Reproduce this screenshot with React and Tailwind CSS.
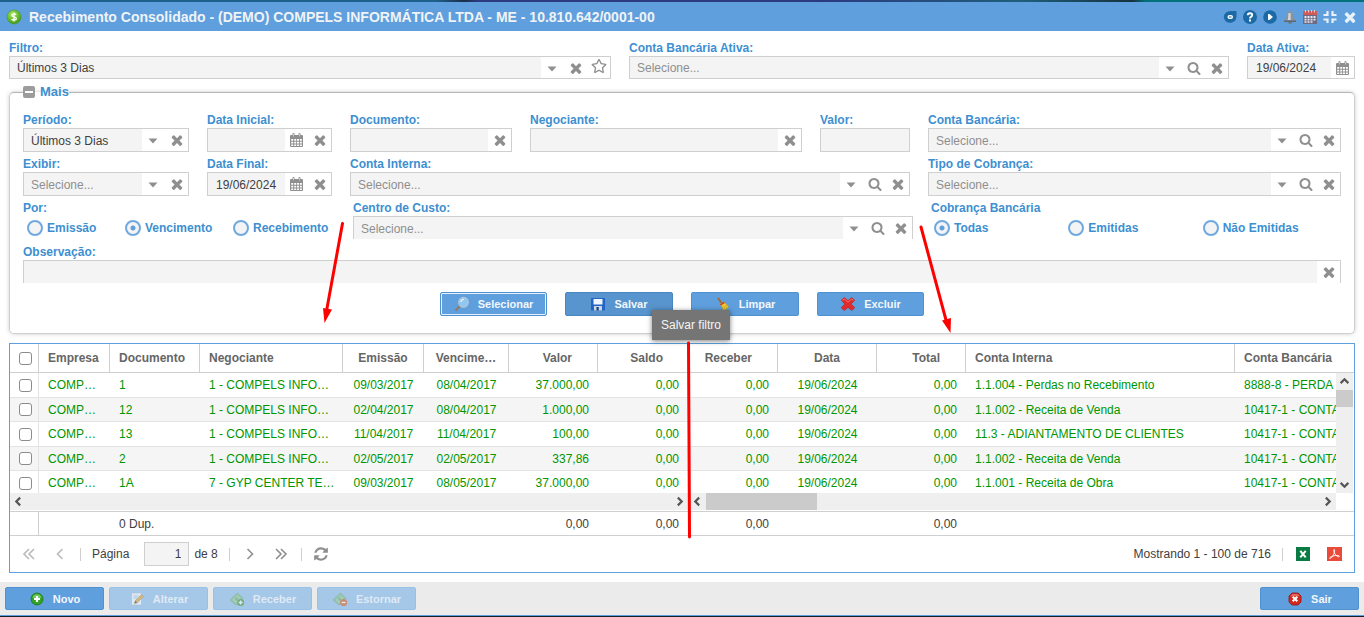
import React from "react";
import { FaRegStar } from "react-icons/fa";

/* ---------- icons ---------- */

function TimesIcon({ className }) {
  return (
    <svg viewBox="0 0 1792 1792" fill="currentColor" className={className} aria-hidden="true">
      <path d="M1490 1322q0 40-28 68l-136 136q-28 28-68 28t-68-28l-294-294-294 294q-28 28-68 28t-68-28l-136-136q-28-28-28-68t28-68l294-294-294-294q-28-28-28-68t28-68l136-136q28-28 68-28t68 28l294 294 294-294q28-28 68-28t68 28l136 136q28 28 28 68t-28 68l-294 294 294 294q28 28 28 68z" />
    </svg>
  );
}

function SearchIcon({ className }) {
  return (
    <svg viewBox="0 0 1792 1792" fill="currentColor" className={className} aria-hidden="true">
      <path d="M1216 832q0-185-131.5-316.5t-316.5-131.5-316.5 131.5-131.5 316.5 131.5 316.5 316.5 131.5 316.5-131.5 131.5-316.5zm512 832q0 52-38 90t-90 38q-54 0-90-38l-343-342q-179 124-399 124-143 0-273.5-55.5t-225-150-150-225-55.5-273.5 55.5-273.5 150-225 225-150 273.5-55.5 273.5 55.5 225 150 150 225 55.5 273.5q0 220-124 399l343 343q37 37 37 90z" />
    </svg>
  );
}

function RefreshIcon({ className }) {
  return (
    <svg viewBox="0 0 1792 1792" fill="currentColor" className={className} aria-hidden="true">
      <path d="M1639 1056q0 5-1 7-64 268-268 434.5t-478 166.5q-146 0-282.5-55t-243.5-157l-129 129q-19 19-45 19t-45-19-19-45v-448q0-26 19-45t45-19h448q26 0 45 19t19 45-19 45l-137 137q71 66 161 102t187 36q134 0 250-65t186-179q11-17 53-117 8-23 30-23h192q13 0 22.5 9.5t9.5 22.5zm25-800v448q0 26-19 45t-45 19h-448q-26 0-45-19t-19-45 19-45l138-138q-148-137-349-137-134 0-250 65t-186 179q-11 17-53 117-8 23-30 23h-199q-13 0-22.500-9.500t-9.500-22.500v-7q65-268 270-434.500t480-166.500q146 0 284 55.500t245 156.500l130-129q19-19 45-19t45 19 19 45z" />
    </svg>
  );
}

function CalendarIcon({ className }) {
  return (
    <svg viewBox="0 0 13 14" className={className} aria-hidden="true">
      <path d="M1 2h1.500V1q0-1 1-1t1 1v1h4V1q0-1 1-1t1 1v1H12q1 0 1 1v10q0 1-1 1H1q-1 0-1-1V3q0-1 1-1z" fill="currentColor" />
      <path d="M3 1v2.500h1V1zM9 1v2.500h1V1z" fill="#fff" opacity="0.500" />
      <path d="M1.200 6h2v1.800h-2zM4.200 6h2v1.800h-2zM7 6h2v1.800H7zM9.900 6h2v1.800h-2zM1.200 8.700h2v1.800h-2zM4.200 8.700h2v1.800h-2zM7 8.700h2v1.800H7zM9.900 8.700h2v1.800h-2zM1.200 11.400h2v1.600h-2zM4.200 11.400h2v1.600h-2zM7 11.400h2v1.600H7zM9.900 11.400h2v1.600h-2z" fill="#fff" />
    </svg>
  );
}

function MoneyIcon() {
  return (
    <svg viewBox="0 0 16 16" className="size-4" aria-hidden="true">
      <defs>
        <radialGradient id="coin" cx="0.4" cy="0.3" r="0.8">
          <stop offset="0" stopColor="#a6e65a" />
          <stop offset="0.6" stopColor="#5fb52a" />
          <stop offset="1" stopColor="#3a8a18" />
        </radialGradient>
      </defs>
      <circle cx="8" cy="8" r="7" fill="url(#coin)" stroke="#4a9a26" strokeWidth="0.6" />
      <path d="M10.200 5.800C9.800 5.100 9 4.800 8 4.800c-1.300 0-2.200.5-2.200 1.500 0 2.200 4.500 1 4.500 3.300 0 1-1 1.600-2.300 1.600-1.100 0-2-.4-2.400-1.100M8 3.500v9" fill="none" stroke="#fff" strokeWidth="1.300" />
    </svg>
  );
}

function EyeIcon() {
  return (
    <svg viewBox="0 0 16 16" className="size-4" aria-hidden="true">
      <path d="M4 3.500Q6 2 9 2h5.500v5q0 5-4.500 6.500-4.500 1-6.500-1.500Q0 7.500 4 3.500z" fill="#1b69a5" />
      <rect x="5.500" y="6" width="5.500" height="4" rx="2" fill="#fff" />
      <rect x="7" y="7.500" width="2.500" height="1" fill="#1b69a5" />
    </svg>
  );
}

function HelpIcon() {
  return (
    <svg viewBox="0 0 16 16" className="size-4" aria-hidden="true">
      <circle cx="8" cy="8" r="7" fill="#1b69a5" />
      <path d="M5.700 6.300Q5.800 4.200 8 4.200t2.200 1.900Q10.200 7.200 9 7.900 8 8.500 8 9.500" fill="none" stroke="#fff" strokeWidth="1.900" />
      <rect x="7" y="10.500" width="2" height="2" fill="#fff" />
    </svg>
  );
}

function PlayIcon() {
  return (
    <svg viewBox="0 0 16 16" className="size-4" aria-hidden="true">
      <circle cx="8" cy="8" r="6.800" fill="#1b69a5" />
      <path d="M6 5h1.500L11 8l-3.500 3H6z" fill="#fff" />
    </svg>
  );
}

function BellIcon() {
  return (
    <svg viewBox="0 0 16 16" className="size-4" aria-hidden="true">
      <path d="M8 1.500c.8 0 1.200.5 1.200 1.200C10.900 3.500 11.300 5 11.500 7c.2 2.300.8 3.200 2.500 4.500H2c1.700-1.300 2.300-2.200 2.500-4.500.2-2 .6-3.500 2.300-4.300 0-.7.4-1.200 1.200-1.200z" fill="#8b939a" />
      <path d="M6.500 4h2.200v7H5.800z" fill="#d0d4d8" />
      <rect x="2" y="11.500" width="12" height="1.500" fill="#5f676e" />
      <rect x="6.500" y="13" width="3" height="1.600" fill="#6b7278" />
    </svg>
  );
}

function AgendaIcon() {
  return (
    <svg viewBox="0 0 16 16" className="size-4" aria-hidden="true">
      <rect x="1" y="2" width="14" height="13" fill="#6d6a86" />
      <rect x="1" y="2" width="14" height="4" fill="#d05a58" />
      <path d="M3.500 1v2.500M6.500 1v2.500M9.500 1v2.500M12.500 1v2.500" stroke="#f5c6c3" strokeWidth="1" />
      <path d="M2.500 7h2v2h-2zM5.500 7h2v2h-2zM8.500 7h2v2h-2zM11.500 7h2v2h-2zM2.500 9.800h2v1.800h-2zM5.500 9.800h2v1.800h-2zM8.500 9.800h2v1.800h-2zM11.500 9.800h2v1.800h-2zM2.500 12.300h2v1.500h-2zM5.500 12.300h2v1.500h-2zM8.500 12.300h2v1.500h-2z" fill="#e9e9f0" />
    </svg>
  );
}

function CompressIcon() {
  return (
    <svg viewBox="0 0 16 16" className="size-4" aria-hidden="true">
      <path d="M5.500 2v4H1.500M10.500 2v4h4M5.500 14v-3.500h-4M10.500 14v-3.500h4" fill="none" stroke="#e8f1fa" strokeWidth="2.200" />
    </svg>
  );
}

function LensIcon() {
  return (
    <svg viewBox="0 0 16 16" className="size-4" aria-hidden="true">
      <path d="M1.500 14.500l4.500-4.500" stroke="#8b7d72" strokeWidth="2.400" />
      <circle cx="9.500" cy="6.300" r="4.800" fill="#8fc7f3" stroke="#b4c4d3" strokeWidth="1.300" />
      <path d="M6.800 6q.5-2.400 3-2.600" fill="none" stroke="#e9f6ff" strokeWidth="1.200" />
    </svg>
  );
}

function SaveIcon() {
  return (
    <svg viewBox="0 0 16 16" className="size-4" aria-hidden="true">
      <rect x="1" y="2" width="14" height="12.500" rx="1" fill="#2463c4" />
      <rect x="3.500" y="3" width="9" height="5.500" fill="#eef5fd" />
      <path d="M4 10h8v4.500H4z" fill="#c9d6e6" />
      <rect x="6.500" y="11" width="2.200" height="3.500" fill="#173e7c" />
    </svg>
  );
}

function BroomIcon() {
  return (
    <svg viewBox="0 0 16 16" className="size-4" aria-hidden="true">
      <path d="M3 2l3.500 5" stroke="#a5692f" strokeWidth="1.800" />
      <path d="M5 8.200l4-2.400 4.500 5c-1 2-3 3-5.500 3.200C7.800 12 7 10 5 8.200z" fill="#f4cf36" stroke="#c59a1a" strokeWidth="0.600" />
      <path d="M5 8.200l4-2.400.9 1.200-4 2.400z" fill="#c9372c" />
      <path d="M8.500 9.700l1.800 3.800M10.200 8.700l2 3.500" stroke="#c59a1a" strokeWidth="0.700" />
    </svg>
  );
}

function RedCrossIcon() {
  return (
    <svg viewBox="0 0 16 16" className="size-4" aria-hidden="true">
      <path d="M1.200 4.200L4.300 1.500 8 4.600l3.700-3.100 3.100 2.700L11.200 8l3.600 3.800-3.100 2.700L8 11.400l-3.700 3.100-3.100-2.700L4.800 8z" fill="#e02b2b" stroke="#c02020" strokeWidth="0.600" strokeLinejoin="round" />
      <path d="M2.600 4.400l1.700-1.500L8 6.100l3.700-3.200 1.700 1.500" fill="none" stroke="#f2736d" strokeWidth="1" />
    </svg>
  );
}

function AddIcon() {
  return (
    <svg viewBox="0 0 16 16" className="size-4" aria-hidden="true">
      <circle cx="8" cy="8" r="6" fill="#31a326" stroke="#1d7517" strokeWidth="0.800" />
      <path d="M3.600 6.600a4.600 4.600 0 018.800 0q-4.400 1.800-8.800 0z" fill="#8bdc76" opacity="0.700" />
      <path d="M8 5v6M5 8h6" stroke="#fff" strokeWidth="2.200" />
    </svg>
  );
}

function EditIcon() {
  return (
    <svg viewBox="0 0 16 16" className="size-4" aria-hidden="true">
      <rect x="2.500" y="2" width="10" height="12" fill="#fff" stroke="#b9b9b9" strokeWidth="0.600" />
      <path d="M4.500 5h5M4.500 7h4" stroke="#aab4c0" strokeWidth="0.800" />
      <path d="M5.500 12.500l.7-2.700L12.500 3.500l2 2-6.300 6.300z" fill="#f0ae3e" stroke="#b77818" strokeWidth="0.500" />
      <path d="M5.500 12.500l.7-2.700 2 2z" fill="#4a4a4a" />
    </svg>
  );
}

function NotesIcon({ minus }) {
  return (
    <svg viewBox="0 0 16 16" className="size-4" aria-hidden="true">
      <path d="M1 9L8.500 2 14 7.500 7 14z" fill="#8cc487" stroke="#6aa868" strokeWidth="0.600" />
      <path d="M3.500 9L8.500 4.500 11.500 7.500 7 11.700z" fill="#a9d3a2" />
      <circle cx="7.600" cy="8" r="1.700" fill="#78b574" />
      <circle cx="11.600" cy="11.500" r="3.500" fill={minus ? "#e8641c" : "#4f9f3a"} />
      <path d={minus ? "M9.600 11.500h4" : "M11.600 9.500v4M9.600 11.500h4"} stroke="#fff" strokeWidth="1.400" />
    </svg>
  );
}

function ExitIcon() {
  return (
    <svg viewBox="0 0 16 16" className="size-4" aria-hidden="true">
      <path d="M5 2h6l3 3v6l-3 3H5l-3-3V5z" fill="#d3281f" stroke="#94140f" strokeWidth="0.800" strokeLinejoin="round" />
      <path d="M5.300 3h5.400l2 2.200H3.300z" fill="#f0857d" opacity="0.700" />
      <path d="M5.700 5.700l4.600 4.600M10.300 5.700l-4.600 4.600" stroke="#fff" strokeWidth="2" />
    </svg>
  );
}

function PageIcon({ dir, double }) {
  const paths = {
    left: double ? "M7 2L2 7l5 5M12 2L7 7l5 5" : "M9.500 2l-5 5 5 5",
    right: double ? "M2 2l5 5-5 5M7 2l5 5-5 5" : "M4.500 2l5 5-5 5",
  };
  return (
    <svg viewBox="0 0 14 14" className="size-[14px]" aria-hidden="true">
      <path d={paths[dir]} fill="none" stroke="currentColor" strokeWidth="1.600" />
    </svg>
  );
}

/* ---------- form pieces ---------- */

const box = "flex border border-[#cfcfcf] bg-white text-[#8f8f8f]";
const well = "min-w-0 flex-1 bg-[#f4f4f4] pl-2 text-xs text-[#404040] outline-none";

function Trigger({ kind, label }) {
  return (
    <button type="button" aria-label={label} className="flex w-[23px] shrink-0 items-center justify-center">
      {kind === "clear" && <TimesIcon className="size-4" />}
      {kind === "search" && <SearchIcon className="size-[14px]" />}
      {kind === "calendar" && <CalendarIcon className="h-[14px] w-[13px]" />}
      {kind === "star" && <FaRegStar className="-mt-1 size-4" />}
    </button>
  );
}

const triggerNames = { clear: "Limpar", search: "Pesquisar", calendar: "Calendário", star: "Favorito" };

function Field({ id, label, value, select, triggers = [], size = "h-6", open, className = "" }) {
  return (
    <div className={"flex min-w-0 flex-col " + className}>
      <label htmlFor={id} className="h-4 truncate text-xs font-bold text-[#3d8fd1]">{label}</label>
      <div className={box + " " + size + (open ? " border-b-0" : "")}>
        {select ? (
          <div className="relative flex min-w-0 flex-1">
            <select
              id={id}
              className={
                "min-w-0 flex-1 appearance-none bg-[linear-gradient(to_right,#f4f4f4_calc(100%-23px),#fff_calc(100%-23px))] pt-px pr-6 pl-[7px] text-xs outline-none " +
                (value ? "text-[#404040]" : "text-[#8f8f8f]")
              }
            >
              <option>{value || "Selecione..."}</option>
            </select>
            <svg viewBox="0 0 10 6" fill="currentColor" className="pointer-events-none absolute top-[9px] right-[7px] h-[6px] w-[10px]" aria-hidden="true">
              <path d="M0.500 0.500h9L5 5.500z" />
            </svg>
          </div>
        ) : (
          <input id={id} type="text" defaultValue={value} className={well + " pt-px"} />
        )}
        {triggers.map((t) => (
          <Trigger key={t} kind={t} label={triggerNames[t] + " " + label} />
        ))}
      </div>
    </div>
  );
}

function Radio({ name, label, checked }) {
  return (
    <label className="flex items-center gap-1 text-xs font-bold whitespace-nowrap text-[#3d8fd1]">
      <input
        type="radio"
        name={name}
        defaultChecked={checked}
        className="size-4 appearance-none rounded-full border-2 border-[#6fa9e0] bg-[#f4f4f4] checked:bg-[radial-gradient(circle,#5f9fdd_2px,#f4f4f4_3px)]"
      />
      {label}
    </label>
  );
}

function ActionButton({ icon, children, variant = "normal", className = "" }) {
  const tone = {
    normal: "border-[#4f92d1] bg-[#5f9fdd] text-[#f2f7fc]",
    hover: "border-[#4a86c0] bg-[#5894cd] text-[#f2f7fc]",
    focus: "border-[#4f92d1] bg-[#5f9fdd] text-[#f2f7fc] ring-1 ring-[#e6f0fa] ring-inset",
    off: "border-[#99c0e6] bg-[#a5c7e8] text-[#dfeaf5]",
  }[variant];
  return (
    <button
      type="button"
      disabled={variant === "off"}
      className={"flex items-center justify-center gap-2 rounded-xs border text-[11px] font-bold " + tone + " " + className}
    >
      <span className={variant === "off" ? "opacity-60" : ""}>{icon}</span>
      {children}
    </button>
  );
}

/* ---------- grid ---------- */

const lockedCols = [
  { title: "Empresa", w: "w-[71px]", align: "left" },
  { title: "Documento", w: "w-[90px]", align: "left" },
  { title: "Negociante", w: "w-[143px]", align: "left" },
  { title: "Emissão", w: "w-[81px]", align: "center" },
  { title: "Vencime…", w: "w-[85px]", align: "center" },
  { title: "Valor", w: "w-[89px]", align: "right" },
  { title: "Saldo", w: "", align: "right" },
];
const freeCols = [
  { title: "Receber", w: "w-[90px]", align: "right" },
  { title: "Data", w: "w-[99px]", align: "center" },
  { title: "Total", w: "w-[89px]", align: "right" },
  { title: "Conta Interna", w: "w-[269px]", align: "left" },
  { title: "Conta Bancária", w: "", align: "left" },
];
const lockedRows = [
  ["COMP…", "1", "1 - COMPELS INFO…", "09/03/2017", "08/04/2017", "37.000,00", "0,00"],
  ["COMP…", "12", "1 - COMPELS INFO…", "02/04/2017", "08/04/2017", "1.000,00", "0,00"],
  ["COMP…", "13", "1 - COMPELS INFO…", "11/04/2017", "11/04/2017", "100,00", "0,00"],
  ["COMP…", "2", "1 - COMPELS INFO…", "02/05/2017", "02/05/2017", "337,86", "0,00"],
  ["COMP…", "1A", "7 - GYP CENTER TE…", "09/03/2017", "08/05/2017", "37.000,00", "0,00"],
];
const freeRows = [
  ["0,00", "19/06/2024", "0,00", "1.1.004 - Perdas no Recebimento", "8888-8 - PERDA"],
  ["0,00", "19/06/2024", "0,00", "1.1.002 - Receita de Venda", "10417-1 - CONTA"],
  ["0,00", "19/06/2024", "0,00", "11.3 - ADIANTAMENTO DE CLIENTES", "10417-1 - CONTA"],
  ["0,00", "19/06/2024", "0,00", "1.1.002 - Receita de Venda", "10417-1 - CONTA"],
  ["0,00", "19/06/2024", "0,00", "1.1.001 - Receita de Obra", "10417-1 - CONTA"],
];

const headAlign = { left: "pl-[9px] text-left", center: "text-center", right: "pr-[25px] text-right" };
const cellAlign = { left: "pl-[9px] text-left", center: "text-center", right: "pr-[9px] text-right" };

function Check({ label }) {
  return (
    <input
      type="checkbox"
      aria-label={label}
      className="block size-[13px] appearance-none rounded-[3px] border border-[#8c8c8c] bg-white"
    />
  );
}

function GridPart({ cols, rows, checks }) {
  return (
    <table className="w-full table-fixed border-separate border-spacing-0">
      <thead>
        <tr className="h-[29px] text-xs text-[#666]">
          {checks && (
            <th className="w-[29px] border-r border-b border-[#cfcfcf] p-0 pl-[9px]">
              <Check label="Selecionar todos" />
            </th>
          )}
          {cols.map((c, i) => (
            <th
              key={c.title}
              className={
                "overflow-hidden border-b border-[#cfcfcf] p-0 font-bold whitespace-nowrap " +
                c.w + " " + headAlign[c.align] + (i < cols.length - 1 ? " border-r" : "")
              }
            >
              {c.title}
            </th>
          ))}
        </tr>
      </thead>
      <tbody>
        {rows.map((r, n) => (
          <tr key={n} className="h-[25px] text-xs text-[#009600] odd:bg-white even:h-6 even:bg-[#f5f5f5]">
            {checks && (
              <td className="border-r border-b border-[#e3e3e3] p-0 pl-[9px]">
                <Check label={"Selecionar documento " + r[1]} />
              </td>
            )}
            {r.map((v, i) => (
              <td key={i} className={"overflow-hidden border-b border-[#e3e3e3] p-0 whitespace-nowrap " + cellAlign[cols[i].align]}>
                {v}
              </td>
            ))}
          </tr>
        ))}
      </tbody>
    </table>
  );
}

function Totals({ cols, values, checks }) {
  return (
    <table className="w-full table-fixed border-separate border-spacing-0">
      <tbody>
        <tr className="h-[25px] text-xs text-[#404040]">
          {checks && <td className="w-[29px] border-y border-r border-[#cfcfcf] p-0" />}
          {values.map((v, i) => (
            <td key={i} className={"border-y border-[#cfcfcf] p-0 whitespace-nowrap " + cols[i].w + " " + cellAlign[cols[i].align]}>
              {v}
            </td>
          ))}
        </tr>
      </tbody>
    </table>
  );
}

function Chevron({ dir }) {
  const d = { left: "M6.500 1.500L3 5l3.500 3.500", right: "M3.500 1.500L7 5 3.500 8.500", up: "M1.500 6.500L5 3l3.500 3.500", down: "M1.500 3.500L5 7l3.500-3.500" }[dir];
  return (
    <svg viewBox="0 0 10 10" className="size-[11px] shrink-0" aria-hidden="true">
      <path d={d} fill="none" stroke="#555" strokeWidth="2" />
    </svg>
  );
}

function Bar() {
  return <span className="h-[13px] w-px bg-[#cfcfcf]" />;
}

/* ---------- page ---------- */

export default function App() {
  return (
    <div className="relative flex w-full flex-col overflow-hidden bg-white font-['Liberation_Sans',Arial,sans-serif] text-xs leading-4">
      <div className="h-[2px] bg-[linear-gradient(to_right,#1f5f8c_0%,#1f5f8c_32%,#1a2f45_34%,#2c3a80_35%,#2c3a80_60%,#1f5f7a_75%,#16323f_83%,#00727a_84%,#00727a_100%)]" />

      <header className="flex h-[29px] items-center bg-[#5f9fdd] pr-[6px] pl-[6px]">
        <MoneyIcon />
        <h1 className="ml-[7px] flex-1 truncate text-sm font-bold text-[#f0f3f6]">
          Recebimento Consolidado - (DEMO) COMPELS INFORMÁTICA LTDA - ME - 10.810.642/0001-00
        </h1>
        <div className="flex gap-1">
          <button type="button" aria-label="Visualizar"><EyeIcon /></button>
          <button type="button" aria-label="Ajuda"><HelpIcon /></button>
          <button type="button" aria-label="Iniciar"><PlayIcon /></button>
          <button type="button" aria-label="Notificações"><BellIcon /></button>
          <button type="button" aria-label="Agenda"><AgendaIcon /></button>
          <button type="button" aria-label="Restaurar"><CompressIcon /></button>
          <button type="button" aria-label="Fechar" className="text-[#e8f1fa]"><TimesIcon className="size-4" /></button>
        </div>
      </header>

      <main className="flex flex-col px-[9px] pt-[9px] pb-[9px]">
        <div className="grid grid-cols-[602fr_600fr_108fr] gap-[18px]">
          <Field id="filtro" label="Filtro:" select value="Últimos 3 Dias" triggers={["clear", "star"]} size="h-[23px]" />
          <Field id="conta-ativa" label="Conta Bancária Ativa:" select triggers={["search", "clear"]} size="h-[23px]" />
          <Field id="data-ativa" label="Data Ativa:" value="19/06/2024" triggers={["calendar"]} size="h-[23px]" />
        </div>

        <fieldset className="mt-[5px] rounded-[5px] border border-[#cfcfcf] border-t-[#b5b5b5] px-[13px] pb-[17px] shadow-[0_0_4px_rgba(0,0,0,0.2)]">
          <legend className="flex h-4 items-center gap-[5px] text-[13px] font-bold text-[#3d8fd1]">
            <button type="button" aria-label="Recolher" className="flex size-3 items-center justify-center rounded-xs bg-[#9c9c9c]">
              <span className="h-[2px] w-2 bg-white" />
            </button>
            Mais
          </legend>

          <div className="mt-3 grid grid-cols-[166fr_125fr_162fr_272fr_90fr_413fr] gap-x-[18px] gap-y-1">
            <Field id="periodo" label="Período:" select value="Últimos 3 Dias" triggers={["clear"]} />
            <Field id="data-inicial" label="Data Inicial:" triggers={["calendar", "clear"]} />
            <Field id="documento" label="Documento:" triggers={["clear"]} />
            <Field id="negociante" label="Negociante:" triggers={["clear"]} />
            <Field id="valor" label="Valor:" />
            <Field id="conta-bancaria" label="Conta Bancária:" select triggers={["search", "clear"]} />
            <Field id="exibir" label="Exibir:" select triggers={["clear"]} />
            <Field id="data-final" label="Data Final:" value="19/06/2024" triggers={["calendar", "clear"]} />
            <Field id="conta-interna" label="Conta Interna:" select triggers={["search", "clear"]} className="col-span-3" />
            <Field id="tipo-cobranca" label="Tipo de Cobrança:" select triggers={["search", "clear"]} />
          </div>

          <div className="mt-1 grid grid-cols-[312fr_560fr_410fr] gap-x-[18px]">
            <div role="radiogroup" aria-labelledby="por" className="flex flex-col">
              <span id="por" className="h-4 font-bold text-[#3d8fd1]">Por:</span>
              <div className="grid h-6 grid-cols-[98px_108px_auto] items-center pl-1">
                <Radio name="por" label="Emissão" />
                <Radio name="por" label="Vencimento" checked />
                <Radio name="por" label="Recebimento" />
              </div>
            </div>
            <Field id="centro-custo" label="Centro de Custo:" select triggers={["search", "clear"]} size="h-[23px]" open />
            <div role="radiogroup" aria-labelledby="cobranca" className="flex flex-col">
              <span id="cobranca" className="h-4 font-bold text-[#3d8fd1]">Cobrança Bancária</span>
              <div className="grid h-6 grid-cols-3 items-center pr-1 pl-[3px]">
                <Radio name="cobranca" label="Todas" checked />
                <Radio name="cobranca" label="Emitidas" />
                <Radio name="cobranca" label="Não Emitidas" />
              </div>
            </div>
          </div>

          <Field id="observacao" label="Observação:" triggers={["clear"]} size="h-[23px]" open className="mt-1" />

          <div className="mt-[9px] flex justify-center gap-[18px]">
            <ActionButton icon={<LensIcon />} variant="focus" className="h-6 w-[107px]">Selecionar</ActionButton>
            <div className="relative">
              <ActionButton icon={<SaveIcon />} variant="hover" className="h-6 w-[108px]">Salvar</ActionButton>
              <div role="tooltip" className="absolute top-[18px] left-[87px] z-10 bg-[#757575] px-[9px] py-[7px] whitespace-nowrap text-[#f5f5f5] shadow-[0_1px_5px_rgba(0,0,0,0.5)]">
                Salvar filtro
              </div>
            </div>
            <ActionButton icon={<BroomIcon />} className="h-6 w-[108px]">Limpar</ActionButton>
            <ActionButton icon={<RedCrossIcon />} className="h-6 w-[107px]">Excluir</ActionButton>
          </div>
        </fieldset>

        <section className="mt-[9px] flex flex-col border border-[#5f9fdd]">
          <div className="flex">
            <div className="flex w-[678px] shrink-0 flex-col">
              <div className="h-[149px] overflow-hidden">
                <GridPart cols={lockedCols} rows={lockedRows} checks />
              </div>
              <div className="flex h-[18px] items-center justify-between border-b border-white bg-[#efefef] px-[3px]">
                <Chevron dir="left" />
                <Chevron dir="right" />
              </div>
              <Totals cols={lockedCols} values={["", "0 Dup.", "", "", "", "0,00", "0,00"]} checks />
            </div>
            <div className="flex min-w-0 flex-1 flex-col">
              <div className="relative h-[149px] overflow-hidden">
                <GridPart cols={freeCols} rows={freeRows} />
                <div className="absolute top-[29px] right-0 bottom-0 flex w-[18px] flex-col items-center justify-between border-r border-white bg-[#efefef] py-[3px]">
                  <Chevron dir="up" />
                  <div className="absolute top-[17px] right-0 left-0 h-[17px] bg-[#cbcbcb]" />
                  <Chevron dir="down" />
                </div>
              </div>
              <div className="mr-[18px] flex h-[18px] items-center border-b border-white bg-[#efefef] pr-[3px] pl-1">
                <Chevron dir="left" />
                <div className="ml-[3px] h-full w-[111px] bg-[#cbcbcb]" />
                <div className="flex-1" />
                <Chevron dir="right" />
              </div>
              <Totals cols={freeCols} values={["0,00", "", "0,00", "", ""]} />
            </div>
          </div>

          <nav className="flex h-9 items-center text-[#404040]">
            <div className="flex items-center pl-3 text-[#8f8f8f]">
              <button type="button" aria-label="Primeira página" className="opacity-60"><PageIcon dir="left" double /></button>
              <button type="button" aria-label="Página anterior" className="ml-[17px] opacity-60"><PageIcon dir="left" /></button>
              <span className="ml-[13px] flex"><Bar /></span>
            </div>
            <label htmlFor="pagina" className="ml-[11px]">Página</label>
            <input id="pagina" type="text" defaultValue="1" className="ml-[15px] h-6 w-[45px] border border-[#cfcfcf] bg-[#f4f4f4] pr-[7px] text-right outline-none" />
            <span className="ml-[5px]">de 8</span>
            <div className="flex items-center pl-[11px] text-[#8f8f8f]">
              <Bar />
              <button type="button" aria-label="Próxima página" className="ml-[13px]"><PageIcon dir="right" /></button>
              <button type="button" aria-label="Última página" className="ml-[17px]"><PageIcon dir="right" double /></button>
              <span className="ml-[13px] flex"><Bar /></span>
              <button type="button" aria-label="Atualizar" className="ml-[11px]"><RefreshIcon className="size-4" /></button>
            </div>
            <span className="ml-auto">Mostrando 1 - 100 de 716</span>
            <span className="ml-[11px] flex"><Bar /></span>
            <button type="button" aria-label="Exportar para Excel" className="ml-[13px]">
              <svg viewBox="0 0 14 14" className="size-[14px]" aria-hidden="true">
                <rect width="14" height="14" fill="#0a7b43" />
                <path d="M4.300 3.800l5.400 6.600M9.700 3.800l-5.400 6.600" stroke="#fff" strokeWidth="2" />
              </svg>
            </button>
            <button type="button" aria-label="Exportar para PDF" className="mr-3 ml-[17px]">
              <svg viewBox="0 0 15 14" className="h-[14px] w-[15px]" aria-hidden="true">
                <rect width="15" height="14" fill="#ea4a3a" />
                <path d="M7 2.500c1.200 0 .4 3.500-.6 5.500S3.200 12 2.600 11.300C2.200 10.300 6 8.700 8.700 8.500s4 .2 3.700 1-2 .3-3.400-1.200S6.200 3.500 7 2.500z" fill="none" stroke="#fff" strokeWidth="0.900" />
              </svg>
            </button>
          </nav>
        </section>
      </main>

      <footer className="flex gap-[5px] border-b border-[#5f9fdd] bg-[#ebebeb] px-[5px] pt-[5px] pb-[5px]">
        <ActionButton icon={<AddIcon />} className="h-[23px] w-[99px]">Novo</ActionButton>
        <ActionButton icon={<EditIcon />} variant="off" className="h-[23px] w-[99px]">Alterar</ActionButton>
        <ActionButton icon={<NotesIcon />} variant="off" className="h-[23px] w-[99px]">Receber</ActionButton>
        <ActionButton icon={<NotesIcon minus />} variant="off" className="h-[23px] w-[99px]">Estornar</ActionButton>
        <ActionButton icon={<ExitIcon />} className="ml-auto h-[23px] w-[99px]">Sair</ActionButton>
      </footer>
      <div className="h-px bg-[#14202b]" />

      <svg className="pointer-events-none absolute top-0 left-0 z-20 h-[617px] w-[1364px]" viewBox="0 0 1364 617" fill="#ff0000" stroke="#ff0000" aria-hidden="true">
        <path d="M342.500 223.500L326.500 311M921 227L946 320M688.500 343L689.500 537" strokeWidth="3" strokeLinecap="round" />
        <path d="M323 308l9 1.500-7.500 13.500zM942 320.500l9-2.500-.5 15z" stroke="none" />
      </svg>
    </div>
  );
}
